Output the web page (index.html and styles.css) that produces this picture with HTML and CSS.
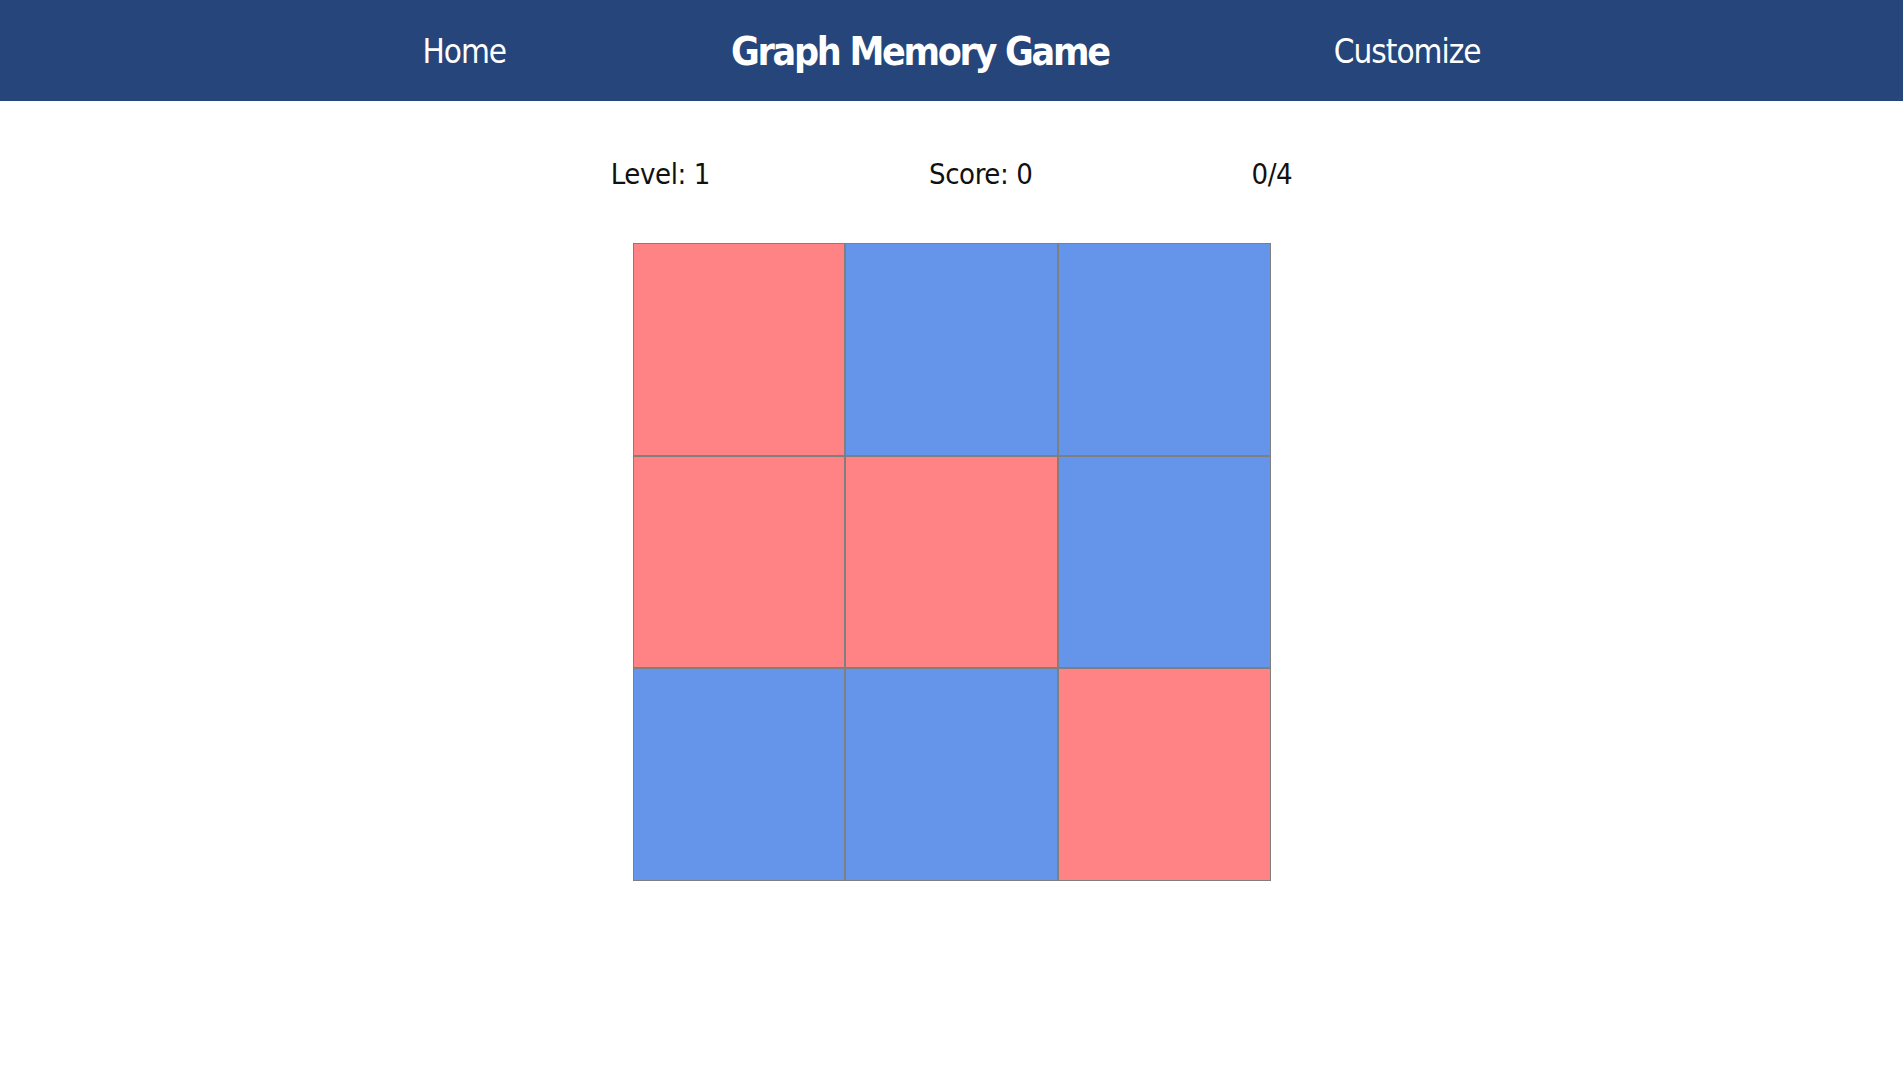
FILE: index.html
```html
<!DOCTYPE html>
<html>
<head>
<meta charset="utf-8">
<title>Graph Memory Game</title>
<link rel="stylesheet" href="styles.css">
</head>
<body>
<header class="topbar">
  <a class="nav-link" href="#">Home</a>
  <h1 class="title">Graph Memory Game</h1>
  <a class="nav-link" href="#">Customize</a>
</header>
<main class="game">
  <div class="stats">
    <span class="stat">Level: 1</span>
    <span class="stat">Score: 0</span>
    <span class="stat">0/4</span>
  </div>
  <div class="board">
    <div class="cell red"></div>
    <div class="cell blue"></div>
    <div class="cell blue"></div>
    <div class="cell red"></div>
    <div class="cell red"></div>
    <div class="cell blue"></div>
    <div class="cell blue"></div>
    <div class="cell blue"></div>
    <div class="cell red"></div>
  </div>
</main>
</body>
</html>
```

FILE: styles.css
```css
* { box-sizing: border-box; }
html, body { margin: 0; padding: 0; background: #fff; }
body { font-family: "DejaVu Sans Condensed", "Liberation Sans", sans-serif; color: #111; }

.topbar {
  height: 101px;
  background: #25457b;
  display: flex;
  align-items: center;
  justify-content: center;
  gap: 225px;
  padding-top: 2px;
}
.nav-link {
  color: #fff;
  text-decoration: none;
  font-size: 33px;
  letter-spacing: -1px;
}
.title {
  margin: 0;
  color: #fff;
  font-size: 39px;
  font-weight: bold;
  letter-spacing: -2.3px;
}

.game {
  display: flex;
  flex-direction: column;
  align-items: center;
}
.stats {
  display: flex;
  gap: 219px;
  margin-top: 55px;
  height: 36px;
  align-items: center;
  font-size: 29px;
  letter-spacing: -0.4px;
}
.board {
  margin-top: 51px;
  width: 638px;
  display: grid;
  grid-template-columns: repeat(3, 1fr);
}
.cell {
  height: 212.67px;
  border: 1px solid #7f7f7f;
}
.red { background: #ff8385; }
.blue { background: #6495ea; }
```
